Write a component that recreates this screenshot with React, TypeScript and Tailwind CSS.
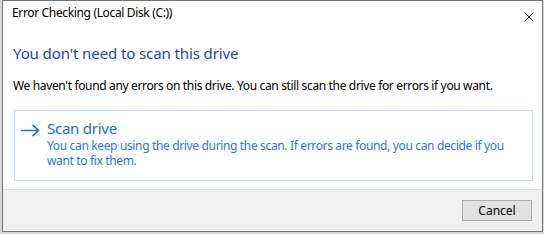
import React from "react";

// Windows 10 "Error Checking" dialog

function CloseGlyph() {
  return (
    <svg width="10" height="10" viewBox="0 0 10 10" className="block">
      <path d="M0.5 0.5 L9.5 9.5 M9.5 0.5 L0.5 9.5" stroke="#111" strokeWidth="1" fill="none" />
    </svg>
  );
}

function ArrowGlyph() {
  return (
    <svg width="19" height="13" viewBox="0 0 19 13" className="block">
      <path d="M0 6.5 H17.5 M11.5 0.8 L17.5 6.5 L11.5 12.2" stroke="#1a73d0" strokeWidth="1.6" fill="none" />
    </svg>
  );
}

export default function App() {
  return (
    <div
      className="w-[544px] h-[234px] bg-[#d8d8d8] pl-[2px] overflow-hidden text-black"
      style={{ fontFamily: '"Noto Sans", "Open Sans", sans-serif' }}
    >
      <div className="w-[541px] h-[232px] border border-[#767676] bg-white flex flex-col">
        {/* Title bar */}
        <div className="h-[30px] flex items-start justify-between pl-[9px] pr-[8px] shrink-0">
          <span className="mt-[4px] text-[12px] leading-[16px] tracking-[-0.35px]">
            Error Checking (Local Disk (C:))
          </span>
          <span className="mt-[11px]">
            <CloseGlyph />
          </span>
        </div>

        {/* Content */}
        <div className="flex-1 pl-[10px] pr-[9px]">
          <h1 className="mt-[12px] text-[15px] leading-[20px] tracking-[-0.1px] text-[#1d43c2] font-normal">
            You don't need to scan this drive
          </h1>
          <p className="mt-[15px] text-[12px] leading-[16px] tracking-[-0.35px]">
            We haven't found any errors on this drive. You can still scan the drive for errors if you want.
          </p>

          <div className="mt-[16px] ml-[1px] h-[71px] border border-[#c9e0f5] flex items-start pl-[6px]">
            <span className="mt-[13px]">
              <ArrowGlyph />
            </span>
            <div className="ml-[7px] mt-[7px]">
              <div className="text-[15px] leading-[20px] tracking-[-0.25px] text-[#1a6fc9]">Scan drive</div>
              <div className="text-[12px] leading-[15px] tracking-[-0.35px] text-[#1f7ae0] whitespace-nowrap">
                You can keep using the drive during the scan. If errors are found, you can decide if you
                <br />
                want to fix them.
              </div>
            </div>
          </div>
        </div>

        {/* Footer */}
        <div className="h-[42px] shrink-0 border-t border-[#dfdfdf] bg-[#f0f0f0] flex items-start justify-end pr-[10px] pt-[10px]">
          <button className="w-[70px] h-[21px] border border-[#adadad] bg-[#e1e1e1] text-[12px] leading-[16px] text-black">
            Cancel
          </button>
        </div>
      </div>
    </div>
  );
}
